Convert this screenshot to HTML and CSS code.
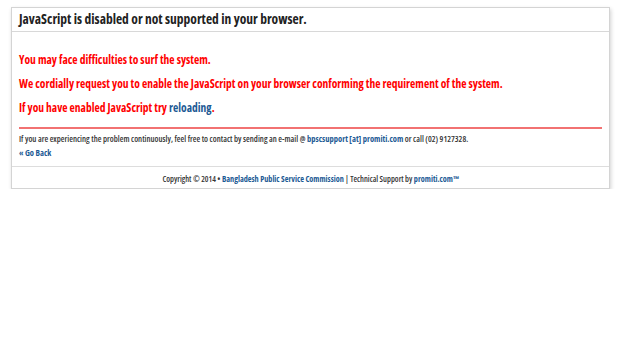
FILE: index.html
```html
<!DOCTYPE html>
<html lang="en">
<head>
    <meta charset="UTF-8">
    <title>JavaScript Disabled</title>
    <link rel="stylesheet" href="styles.css">
</head>
<body>

<div class="panel">
    <div class="panel-head">
        <h1>JavaScript is disabled or not supported in your browser.</h1>
    </div>

    <div class="panel-body">
        <p class="warn">You may face difficulties to surf the system.</p>
        <p class="warn">We cordially request you to enable the JavaScript on your browser conforming the requirement of the system.</p>
        <p class="warn">If you have enabled JavaScript try <a href="#">reloading</a>.</p>

        <hr class="red-line">

        <p class="contact">If you are experiencing the problem continuously, feel free to contact by sending an e-mail @ <a href="#">bpscsupport [at] promiti.com</a> or call (02) 9127328.</p>
        <p class="contact"><a href="#">&laquo; Go Back</a></p>
    </div>

    <div class="panel-foot">
        Copyright &copy; 2014 &bull; <a href="#">Bangladesh Public Service Commission</a> | Technical Support by <a href="#">promiti.com&trade;</a>
    </div>
</div>

</body>
</html>
```

FILE: styles.css
```css
body {
    font-family: "Open Sans", "Noto Sans", sans-serif;
    font-stretch: 75%;
    margin: 0;
    padding: 7px 10px 0 11px;
    background-color: #fff;
    color: #333;
}

a {
    color: #1c5a94;
    text-decoration: none;
}

.panel {
    border: 1px solid #d4d4d4;
    box-shadow: 1px 2px 4px rgba(0, 0, 0, 0.18);
    background-color: #fff;
}

.panel-head {
    padding: 4px 7px 4px;
    border-bottom: 1px solid #d8d8d8;
}

h1 {
    margin: 0;
    font-size: 13.5px;
    font-weight: 700;
    line-height: 15px;
    color: #222;
}

.panel-body {
    padding: 20px 7px 5px;
}

.warn {
    margin: 0 0 8px;
    font-size: 11.5px;
    font-weight: 700;
    line-height: 16px;
    color: #f00;
}

.red-line {
    border: 0;
    border-top: 2px solid #f27272;
    margin: 11px 0 4px;
}

.contact {
    margin: 0 0 3px;
    font-size: 8.5px;
    font-weight: 600;
    line-height: 11px;
    color: #333;
}

.contact a {
    font-weight: 700;
}

.panel-foot {
    border-top: 1px solid #ddd;
    padding: 7px 0 5px;
    text-align: center;
    font-size: 8.2px;
    font-weight: 600;
    line-height: 9px;
    color: #333;
}

.panel-foot a {
    font-weight: 700;
}
```
